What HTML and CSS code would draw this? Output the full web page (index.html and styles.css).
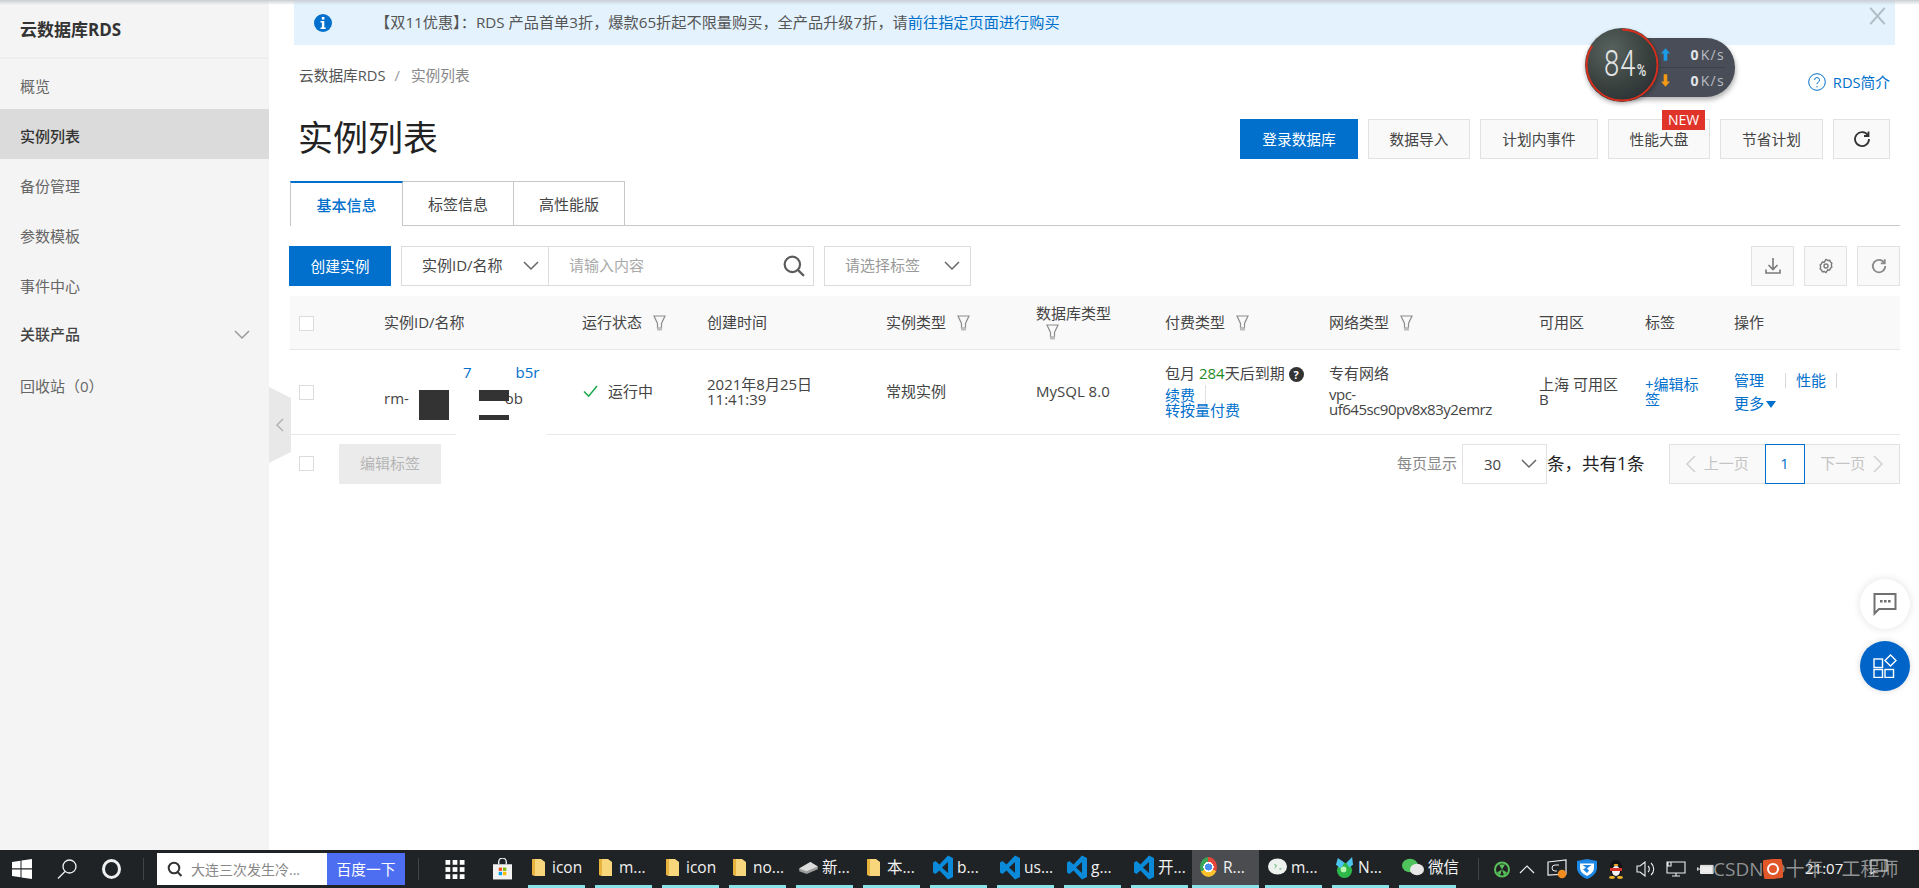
FILE: index.html
```html
<!DOCTYPE html>
<html lang="zh">
<head>
<meta charset="utf-8">
<title>实例列表</title>
<link rel="stylesheet" href="styles.css">
</head>
<body>
<div class="main">
  <aside class="sidebar">
    <div class="side-title">云数据库RDS</div>
    <nav>
      <div class="side-item low">概览</div>
      <div class="side-item active">实例列表</div>
      <div class="side-item low">备份管理</div>
      <div class="side-item low">参数模板</div>
      <div class="side-item low">事件中心</div>
      <div class="side-item strong">关联产品<svg class="side-chev" viewBox="0 0 16 10"><path d="M1 1l7 7 7-7"/></svg></div>
      <div class="side-item low">回收站（0）</div>
    </nav>
  </aside>
  <svg class="collapse" viewBox="0 0 22 76"><path d="M0 0L22 11V65L0 76Z" fill="#e8e8e8"/><path d="M14 32L8 38l6 6" fill="none" stroke="#b4b4b4" stroke-width="1.6"/></svg>
  <section class="content">
    <div class="banner">
      <svg class="info" viewBox="0 0 18 18"><circle cx="9" cy="9" r="9" fill="#0070cc"/><rect x="7.8" y="3" width="2.6" height="2.6" fill="#fff"/><path d="M6.5 7h3.8v6.4h1.4V15H6.5v-1.6h1.4V8.600H6.500z" fill="#fff"/></svg>
      <span class="banner-text">【双11优惠】：RDS 产品首单3折，爆款65折起不限量购买，全产品升级7折，请<a>前往指定页面进行购买</a></span>
      <svg class="banner-close" viewBox="0 0 18 20"><path d="M1 1l16 18M17 1L1 19"/></svg>
    </div>
    <div class="crumb-row">
      <div class="crumb"><span>云数据库RDS</span><i>/</i><em>实例列表</em></div>
      <a class="help"><svg viewBox="0 0 18 18"><circle cx="9" cy="9" r="8.300"/><path d="M6.500 7a2.500 2.500 0 1 1 3.600 2.300c-.8.400-1.100.9-1.100 1.900M9 13v1.300"/></svg>RDS简介</a>
    </div>
    <div class="title-row">
      <h1>实例列表</h1>
      <div class="actions">
        <button class="btn primary w118">登录数据库</button>
        <button class="btn w102">数据导入</button>
        <button class="btn w118">计划内事件</button>
        <button class="btn w102 has-new">性能大盘<span class="new">NEW</span></button>
        <button class="btn w103">节省计划</button>
        <button class="btn w57"><svg class="ico-refresh dark" viewBox="0 0 18 18"><path d="M15 5.500A7 7 0 1 0 16 9M15.500 1.500v4.500H11"/></svg></button>
      </div>
    </div>
    <div class="tabs">
      <div class="tab on">基本信息</div>
      <div class="tab">标签信息</div>
      <div class="tab">高性能版</div>
    </div>
    <div class="toolbar">
      <button class="btn primary create">创建实例</button>
      <div class="search">
        <div class="sel-id">实例ID/名称<svg class="chev" viewBox="0 0 16 10"><path d="M1 1l7 7 7-7"/></svg></div>
        <div class="sel-input">请输入内容<svg class="mag" viewBox="0 0 20 20"><circle cx="8.500" cy="8.500" r="7"/><path d="M13.500 13.500L19 19"/></svg></div>
      </div>
      <div class="sel-tag">请选择标签<svg class="chev" viewBox="0 0 16 10"><path d="M1 1l7 7 7-7"/></svg></div>
      <div class="tool-right">
        <button class="tool"><svg viewBox="0 0 16 18"><path d="M8 1v11M3.500 8L8 12.500 12.500 8M1 12.500v3.500h14v-3.500"/></svg></button>
        <button class="tool gap"><svg class="gear" viewBox="0 0 16 18"><path d="M8 1.500l2 1.200 2.200-.3 1 2 1.500 1.500-.6 2.100.6 2.100-1.500 1.500-1 2-2.200-.3L8 16.500 6 15.300l-2.200.3-1-2-1.500-1.500.6-2.100-.6-2.100 1.500-1.500 1-2 2.200.3z"/><circle cx="8" cy="9" r="2.300"/></svg></button>
        <button class="tool"><svg class="redo" viewBox="0 0 18 18"><path d="M15 5.500A7 7 0 1 0 16 9M15.500 1.500v4.500H11"/></svg></button>
      </div>
    </div>
    <table class="grid">
      <colgroup>
        <col class="c0"><col class="c1"><col class="c2"><col class="c3"><col class="c4"><col class="c5"><col class="c6"><col class="c7"><col class="c8"><col class="c9"><col class="c10">
      </colgroup>
      <thead>
        <tr>
          <th><span class="check"></span></th>
          <th>实例ID/名称</th>
          <th>运行状态<svg class="funnel" viewBox="0 0 13 16"><path d="M1 1h11L8.500 8.500V13h-4V8.500z"/><rect class="f-foot" x="4" y="12.500" width="5" height="3"/></svg></th>
          <th>创建时间</th>
          <th>实例类型<svg class="funnel" viewBox="0 0 13 16"><path d="M1 1h11L8.500 8.500V13h-4V8.500z"/><rect class="f-foot" x="4" y="12.500" width="5" height="3"/></svg></th>
          <th>数据库类型<br><svg class="funnel solo" viewBox="0 0 13 16"><path d="M1 1h11L8.500 8.500V13h-4V8.500z"/><rect class="f-foot" x="4" y="12.500" width="5" height="3"/></svg></th>
          <th>付费类型<svg class="funnel" viewBox="0 0 13 16"><path d="M1 1h11L8.500 8.500V13h-4V8.500z"/><rect class="f-foot" x="4" y="12.500" width="5" height="3"/></svg></th>
          <th>网络类型<svg class="funnel" viewBox="0 0 13 16"><path d="M1 1h11L8.500 8.500V13h-4V8.500z"/><rect class="f-foot" x="4" y="12.500" width="5" height="3"/></svg></th>
          <th>可用区</th>
          <th>标签</th>
          <th>操作</th>
        </tr>
      </thead>
      <tbody>
        <tr>
          <td><span class="check"></span></td>
          <td class="id-cell">
            <div class="id-wrap">
              <div class="id-a"><a>7</a><a>b5r</a></div>
              <div class="id-b"><span>rm-</span><span>ob</span></div>
            </div>
          </td>
          <td><span class="status"><svg viewBox="0 0 16 14"><path d="M1 7l5 5 9-11"/></svg>运行中</span></td>
          <td>2021年8月25日<br>11:41:39</td>
          <td>常规实例</td>
          <td>MySQL 8.0</td>
          <td>
            <div class="pay-line">包月 <b>284</b>天后到期<span class="q">?</span></div>
            <div class="links"><a class="sep-r">续费</a><br><a>转按量付费</a></div>
          </td>
          <td><div class="pay-line">专有网络</div><div class="links vpc">vpc-<br>uf645sc90pv8x83y2emrz</div></td>
          <td class="zone">上海 可用区 B</td>
          <td class="tagcell"><a>+编辑标签</a></td>
          <td>
            <div class="ops"><a class="bar">管理</a><a class="bar">性能</a></div>
            <div class="ops more"><a>更多<i class="tri"></i></a></div>
          </td>
        </tr>
      </tbody>
    </table>
    <div class="foot">
      <span class="check"></span>
      <button class="edit-tags">编辑标签</button>
      <div class="pager-wrap">
        <span class="per">每页显示</span>
        <div class="per-sel">30<svg class="chev" viewBox="0 0 16 10"><path d="M1 1l7 7 7-7"/></svg></div>
        <span class="total">条，共有1条</span>
        <div class="pager">
          <span class="pg side"><svg viewBox="0 0 10 18"><path d="M9 1L1 9l8 8"/></svg>上一页</span>
          <span class="pg cur">1</span>
          <span class="pg side">下一页<svg viewBox="0 0 10 18"><path d="M1 1l8 8-8 8"/></svg></span>
        </div>
      </div>
    </div>
  </section>
</div>

<footer class="taskbar">
  <svg class="t-win" viewBox="0 0 20 20"><path d="M0 3l8.500-1.300v7.600H0zM9.500 1.500L20 0v9.300H9.500zM0 10.500h8.500v7.700L0 17zM9.500 10.500H20V20L9.500 18.400z" fill="#fff"/></svg>
  <svg class="t-mag" viewBox="0 0 20 20"><circle cx="12.500" cy="7.500" r="6.500"/><path d="M8 12.500L1 19.500"/></svg>
  <span class="t-ring"></span>
  <span class="t-sep s1"></span>
  <div class="baidu">
    <div class="b-in"><svg viewBox="0 0 16 16"><circle cx="7" cy="7" r="5.300"/><path d="M10.500 11l4 4"/></svg>大连三次发生冷...</div>
    <div class="b-go">百度一下</div>
  </div>
  <span class="t-sep s2"></span>
  <svg class="t-apps" viewBox="0 0 20 20"><g fill="#fff"><rect width="5" height="5"/><rect x="7.500" width="5" height="5"/><rect x="15" width="5" height="5"/><rect y="7.500" width="5" height="5"/><rect x="7.500" y="7.500" width="5" height="5"/><rect x="15" y="7.500" width="5" height="5"/><rect y="15" width="5" height="5"/><rect x="7.500" y="15" width="5" height="5"/><rect x="15" y="15" width="5" height="5"/></g></svg>
  <svg class="t-store" viewBox="0 0 20 22"><path d="M6 6V3.500a4 4 0 0 1 8 0V6" fill="none" stroke="#e8e8e8" stroke-width="1.500"/><rect y="6" width="20" height="16" fill="#f2f2f2"/><rect x="6" y="9.500" width="3.500" height="3.500" fill="#f25022"/><rect x="10.500" y="9.500" width="3.500" height="3.500" fill="#7fba00"/><rect x="6" y="14" width="3.500" height="3.500" fill="#00a4ef"/><rect x="10.500" y="14" width="3.500" height="3.500" fill="#ffb900"/></svg>
  <div class="apps">
    <div class="app"><svg class="i-folder" viewBox="0 0 13 18"><path d="M0 1h9l4 3v14H3l-3-1z" fill="#f7d67c"/><path d="M0 1h3v16H0z" fill="#e7b33d"/></svg>icon</div>
    <div class="app"><svg class="i-folder" viewBox="0 0 13 18"><path d="M0 1h9l4 3v14H3l-3-1z" fill="#f7d67c"/><path d="M0 1h3v16H0z" fill="#e7b33d"/></svg>m...</div>
    <div class="app"><svg class="i-folder" viewBox="0 0 13 18"><path d="M0 1h9l4 3v14H3l-3-1z" fill="#f7d67c"/><path d="M0 1h3v16H0z" fill="#e7b33d"/></svg>icon</div>
    <div class="app"><svg class="i-folder" viewBox="0 0 13 18"><path d="M0 1h9l4 3v14H3l-3-1z" fill="#f7d67c"/><path d="M0 1h3v16H0z" fill="#e7b33d"/></svg>no...</div>
    <div class="app"><svg class="i-drive" viewBox="0 0 20 14"><path d="M0 8l12-7 8 5v3L8 14 0 11z" fill="#9b9b9b"/><path d="M0 8l8 3 12-5-8-5z" fill="#dcdcdc"/></svg>新...</div>
    <div class="app"><svg class="i-folder" viewBox="0 0 13 18"><path d="M0 1h9l4 3v14H3l-3-1z" fill="#f7d67c"/><path d="M0 1h3v16H0z" fill="#e7b33d"/></svg>本...</div>
    <div class="app"><svg class="i-code" viewBox="0 0 20 24"><path fill-rule="evenodd" d="M15 0l5 2.500v19L15 24 6.500 15 2.500 18.500 0 17V7l2.500-1.500 4 3.500zM15 6.500L9 12l6 5.500z" fill="#0a8ad8"/></svg>b...</div>
    <div class="app"><svg class="i-code" viewBox="0 0 20 24"><path fill-rule="evenodd" d="M15 0l5 2.500v19L15 24 6.500 15 2.500 18.500 0 17V7l2.500-1.500 4 3.500zM15 6.500L9 12l6 5.500z" fill="#0a8ad8"/></svg>us...</div>
    <div class="app"><svg class="i-code" viewBox="0 0 20 24"><path fill-rule="evenodd" d="M15 0l5 2.500v19L15 24 6.500 15 2.500 18.500 0 17V7l2.500-1.500 4 3.500zM15 6.500L9 12l6 5.500z" fill="#0a8ad8"/></svg>g...</div>
    <div class="app"><svg class="i-code" viewBox="0 0 20 24"><path fill-rule="evenodd" d="M15 0l5 2.500v19L15 24 6.500 15 2.500 18.500 0 17V7l2.500-1.500 4 3.500zM15 6.500L9 12l6 5.500z" fill="#0a8ad8"/></svg>开...</div>
    <div class="app cur"><span class="i-chrome"></span>R...</div>
    <div class="app"><svg class="i-chat" viewBox="0 0 20 18"><ellipse cx="10" cy="8.500" rx="10" ry="8.500" fill="#eef2ee"/><path d="M7 6l2 2-2 2M12 11h2" stroke="#3ba55c" fill="none"/></svg>m...</div>
    <div class="app"><svg class="i-gem" viewBox="0 0 20 24"><circle cx="10" cy="15" r="8" fill="#2fb84a"/><path d="M3 2l7 5-4 6-5-4zM12 7l6-6 1 8-4 3z" fill="#4cc3ec"/><circle cx="9" cy="14" r="3" fill="#b8f5b0"/></svg>N...</div>
    <div class="app"><svg class="i-wechat" viewBox="0 0 22 18"><ellipse cx="8" cy="7.500" rx="8" ry="6.800" fill="#4fc35b"/><ellipse cx="15" cy="11.500" rx="7" ry="5.800" fill="#e8e8e8"/></svg>微信</div>
  </div>
  <span class="t-sep s3"></span>
  <div class="tray">
    <svg class="tr-g" viewBox="0 0 16 16"><rect width="16" height="16" rx="3" fill="#222"/><circle cx="8" cy="8" r="7" fill="none" stroke="#58c05a" stroke-width="2"/><path d="M8 8L5 3h6zM8 8l5 3-3 3zM8 8l-5 3 3 3z" fill="#58c05a"/></svg>
    <svg class="tr-up" viewBox="0 0 16 9"><path d="M1 8l7-7 7 7"/></svg>
    <svg class="tr-sync" viewBox="0 0 20 20"><path d="M1 3l18-2v14L1 16z" fill="none" stroke="#eee" stroke-width="1.200"/><path d="M12 6H8a2 2 0 0 0 0 6h2" fill="none" stroke="#eee"/><circle cx="15" cy="15" r="4.300" fill="#f28c1e"/></svg>
    <svg class="tr-shield" viewBox="0 0 20 20"><path d="M0 2l10-2 10 2v7c0 5-5 9-10 11C5 18 0 14 0 9z" fill="#1e88e5"/><path d="M3 4.500h14V9c0 3.500-3.500 6.500-7 8-3.500-1.500-7-4.500-7-8z" fill="#fff"/><path d="M5.500 6h9l-4.500 3.500 2 2L10 14l-4-3.500 3-2z" fill="#1e88e5"/></svg>
    <svg class="tr-qq" viewBox="0 0 14 20"><ellipse cx="7" cy="9" rx="6" ry="8" fill="#111"/><ellipse cx="7" cy="12" rx="4" ry="5" fill="#f4f4f4"/><rect x="1" y="9" width="12" height="3" fill="#d9342b"/><ellipse cx="7" cy="6" rx="2.500" ry="1" fill="#f1b32b"/><ellipse cx="3" cy="18.500" rx="3" ry="1.400" fill="#f1b32b"/><ellipse cx="11" cy="18.500" rx="3" ry="1.400" fill="#f1b32b"/></svg>
    <svg class="tr-vol" viewBox="0 0 20 16"><path d="M1 5h3l5-4v14l-5-4H1zM12 5a4 4 0 0 1 0 6M15 2a8 8 0 0 1 0 12"/></svg>
    <svg class="tr-net" viewBox="0 0 20 16"><path d="M1 1h18v11H1zM10 12v3M6 15h8M2 1v4h3V1"/></svg>
    <svg class="tr-bat" viewBox="0 0 20 12"><path d="M5 2h14v9H5zM5 6H1M2 4v4"/><rect x="6" y="3" width="12" height="7" fill="#eee"/></svg>
    <span class="clock">21:07</span>
    <svg class="tr-note" viewBox="0 0 18 16"><path d="M1 1h16v11H5l-4 3z"/></svg>
  </div>
  <div class="mark"><span>CSDN @十年</span><svg class="mark-ico" viewBox="0 0 20 20"><rect width="20" height="20" rx="3" fill="#e2572a" transform="rotate(-8 10 10)"/><circle cx="10" cy="10" r="5" fill="none" stroke="#fff" stroke-width="2"/></svg><span class="mark-tail">工程师</span></div>
</footer>

<div class="topshade"></div>

<div class="gauge">
  <div class="g-pill">
    <div class="g-row"><svg viewBox="0 0 10 14"><path d="M5 0l5 6H7v8H3V6H0z" fill="#1c9be6"/></svg><span><b>0</b>K/s</span></div>
    <div class="g-row"><svg viewBox="0 0 10 14"><path d="M5 14l5-6H7V0H3v8H0z" fill="#f29a16"/></svg><span><b>0</b>K/s</span></div>
  </div>
  <div class="g-circle">
    <svg viewBox="0 0 74 74"><circle cx="37" cy="37" r="35.500" fill="none" stroke="#d62f1c" stroke-width="2" stroke-dasharray="187.400 35.700" transform="rotate(-90 37 37)"/></svg>
    <span class="g-num">84<small>%</small></span>
  </div>
</div>

<div class="mask m-white"></div>
<div class="mask m-white2"></div>
<div class="mask m-a"></div>
<div class="mask m-b"></div>
<div class="mask m-c"></div>

<button class="fab fab-chat"><svg viewBox="0 0 24 24"><path d="M1.500 2h21v15H6l-4.500 4.500z" fill="none" stroke="#707070" stroke-width="2"/><path d="M7 8h2.600v2.600H7zM11 8h2.600v2.600H11zM15 8h2.600v2.600H15z" fill="#707070"/></svg></button>
<button class="fab fab-apps"><svg viewBox="0 0 24 24" fill="none" stroke="#fff" stroke-width="1.400"><rect x="1" y="5" width="8.500" height="8.500"/><rect x="1" y="15.500" width="8.500" height="8"/><rect x="12" y="15.500" width="8.500" height="8"/><path d="M17.500 1l5.500 5.500-5.500 5.500L12 6.500z"/></svg></button>
</body>
</html>
```
FILE: styles.css
```css
* { box-sizing: border-box; }
html, body { margin: 0; height: 888px; overflow: hidden; background: #fff; }
body {
  font-family: "Open Sans", "Noto Sans CJK SC", sans-serif;
  font-size: 15px;
  line-height: 15px;
  color: #333;
  display: flex;
  flex-direction: column;
  position: relative;
}
a { color: #0070cc; text-decoration: none; }
button { font: inherit; cursor: pointer; }

.main { display: flex; height: 850px; position: relative; }

/* sidebar */
.sidebar { width: 269px; flex: none; background: #f4f4f4; }
.side-title {
  height: 59px;
  padding: 12px 0 0 20px;
  font-size: 17px;
  line-height: 36px;
  font-weight: 700;
  color: #333;
  border-bottom: 2px solid #eeeeee;
}
.side-item {
  height: 50px;
  line-height: 50px;
  padding-left: 20px;
  color: #666;
  position: relative;
  font-size: 15px;
}
.side-item.low { padding-top: 2px; }
.side-item.active { background: #dbdbdb; color: #333; font-weight: 500; padding-top: 2px; }
.side-item.strong { color: #444; font-weight: 500; }
.side-chev { position: absolute; left: 234px; top: 21px; width: 16px; height: 10px; fill: none; stroke: #9a9a9a; stroke-width: 1.500; }

.collapse { position: absolute; left: 269px; top: 387px; width: 22px; height: 76px; }

/* content */
.content { flex: 1; min-width: 0; padding-bottom: 0; }
.banner {
  height: 45px;
  margin: 0 24px 0 25px;
  background: #e3f2fd;
  display: flex;
  align-items: center;
  position: relative;
  padding-left: 20px;
  color: #555;
}
.info { width: 18px; height: 20px; margin-top: 0; flex: none; }
.banner-text { margin-left: 43px; font-size: 15.200px; }
.banner-close { position: absolute; right: 8px; top: 7px; width: 19px; height: 18px; fill: none; stroke: #b2bec6; stroke-width: 2.400; }

.crumb-row { display: flex; justify-content: space-between; height: 74px; padding: 0 29px 0 30px; }
.crumb { margin-top: 23px; color: #555; font-size: 14.700px; }
.crumb i { font-style: normal; color: #999; margin: 0 11px 0 9px; }
.crumb em { font-style: normal; color: #888; }
.help { display: flex; align-items: center; height: 20px; margin-top: 27px; font-size: 14.700px; }
.help svg { width: 18px; height: 18px; margin-right: 7px; fill: none; stroke: #0070cc; stroke-width: 1; }

.title-row { display: flex; justify-content: space-between; height: 40px; padding: 0 29px 0 29px; margin-bottom: 22px; }
h1 { margin: 0; font-size: 35px; line-height: 37px; font-weight: 400; color: #222; }
.actions { display: flex; gap: 10px; }

.btn {
  height: 40px;
  border: 1px solid #e2e2e2;
  background: #f9f9f9;
  color: #444;
  padding: 0;
  font-size: 14.700px;
  position: relative;
}
.btn.primary { background: #0070cc; border-color: #0070cc; color: #fff; }
.w118 { width: 118px; }
.w102 { width: 102px; }
.w103 { width: 103px; }
.w57 { width: 57px; }
.new {
  position: absolute;
  left: 53px;
  top: -10px;
  width: 43px;
  height: 20px;
  background: #e0332a;
  color: #fff;
  line-height: 20px;
  font-size: 14px;
  text-align: center;
}
.ico-refresh { width: 18px; height: 18px; fill: none; stroke: #333; stroke-width: 1.800; vertical-align: middle; }

.tabs { display: flex; height: 45px; margin: 0 19px 0 21px; border-bottom: 1px solid #c8c8c8; }
.tab {
  width: 111px;
  height: 45px;
  border: 1px solid #c8c8c8;
  border-left: 0;
  line-height: 45px;
  text-align: center;
  color: #444;
}
.tab.on {
  width: 113px;
  border-left: 1px solid #c8c8c8;
  border-top: 2px solid #0070cc;
  border-bottom: 0;
  background: #fff;
  color: #0070cc;
  font-weight: 500;
}

.toolbar { display: flex; height: 40px; margin: 20px 19px 10px 20px; }
.create { width: 102px; border: 0; }
.search { display: flex; width: 413px; margin-left: 10px; border: 1px solid #dcdcdc; height: 40px; }
.sel-id {
  width: 147px;
  border-right: 1px solid #dcdcdc;
  padding-left: 20px;
  line-height: 36px;
  color: #444;
  position: relative;
}
.chev { position: absolute; width: 16px; height: 10px; fill: none; stroke: #666; stroke-width: 1.500; }
.sel-id .chev { right: 9px; top: 14px; }
.sel-input { flex: 1; padding-left: 20px; line-height: 36px; color: #aaa; position: relative; }
.mag { position: absolute; right: 8px; top: 8px; width: 22px; height: 22px; fill: none; stroke: #5c5c5c; stroke-width: 2; }
.sel-tag { width: 147px; margin-left: 10px; border: 1px solid #dcdcdc; padding-left: 20px; line-height: 36px; color: #999; position: relative; }
.sel-tag .chev { right: 10px; top: 14px; }
.tool-right { display: flex; margin-left: auto; }
.tool { width: 43px; height: 40px; background: #f9f9f9; border: 1px solid #e2e2e2; padding: 0; }
.tool.gap { margin: 0 10px; }
.tool svg { width: 16px; height: 18px; fill: none; stroke: #7a7a7a; stroke-width: 1.600; vertical-align: middle; }
.tool svg.gear { width: 14px; height: 16px; }
.tool svg.redo { stroke-width: 2; stroke: #8a8a8a; }

/* table */
.grid { width: 1610px; margin-left: 21px; border-collapse: collapse; table-layout: fixed; }
.c0 { width: 94px; } .c1 { width: 198px; } .c2 { width: 125px; } .c3 { width: 179px; }
.c4 { width: 150px; } .c5 { width: 129px; } .c6 { width: 164px; } .c7 { width: 210px; }
.c8 { width: 106px; } .c9 { width: 89px; } .c10 { width: 166px; }
th, td { padding: 0; text-align: left; font-weight: 400; vertical-align: middle; }
th:first-child, td:first-child { padding-left: 9px; }
thead tr { background: #f9f9f9; height: 53px; border-bottom: 1px solid #e8e8e8; }
th { color: #444; line-height: 18px; }
tbody tr { height: 85px; border-bottom: 1px solid #e8e8e8; }
td { color: #444; }
.check { display: inline-block; width: 15px; height: 15px; border: 1px solid #dcdcdc; background: #fff; vertical-align: middle; }
.funnel { width: 13px; height: 16px; margin-left: 11px; fill: none; stroke: #8e8e8e; stroke-width: 1.200; vertical-align: -3px; }
.funnel .f-foot { fill: #bdbdbd; stroke: none; }
.funnel.solo { margin-left: 10px; }
.id-wrap { height: 42px; display: flex; flex-direction: column; gap: 10px; margin-top: -14px; }
.id-a { padding-left: 79px; display: flex; gap: 44px; line-height: 16px; }
.id-b { display: flex; gap: 96px; line-height: 16px; }
.status { display: inline-flex; align-items: center; }
.status svg { width: 15px; height: 13px; margin: 0 10px 0 1px; fill: none; stroke: #1ba84a; stroke-width: 1.600; }
.pay-line { margin-bottom: 6px; white-space: nowrap; }
.pay-line b { font-weight: 400; color: #1f8a1f; }
.q { display: inline-block; width: 15px; height: 15px; border-radius: 50%; background: #333; color: #fff; font-size: 11px; line-height: 15px; text-align: center; font-weight: 700; margin-left: 4px; vertical-align: 0; }
.sep-r { padding-right: 10px; border-right: 1px solid #e0e0e0; }
.links { line-height: 15px; }
.vpc { color: #444; letter-spacing: -.5px; }
.zone { padding-right: 14px; }
.tagcell { padding-right: 24px; }
.ops { display: flex; }
.bar { padding-right: 10px; margin-right: 10px; border-right: 1px solid #d8d8d8; }
.bar:first-child { padding-right: 21px; }
.more { margin-top: 8px; }
.tri { display: inline-block; width: 0; height: 0; border: 5.500px solid transparent; border-top: 7px solid #0070cc; border-bottom: 0; margin-left: 2px; vertical-align: 1px; }

.foot { display: flex; align-items: center; height: 40px; margin: 9px 19px 0 30px; }
.edit-tags { width: 102px; height: 40px; margin-left: 25px; background: #ebebeb; border: 0; color: #b5b5b5; padding: 0; }
.pager-wrap { display: flex; align-items: center; margin-left: auto; }
.per { color: #888; margin-right: 5px; }
.per-sel { width: 85px; height: 40px; border: 1px solid #e2e2e2; line-height: 38px; padding-left: 21px; position: relative; color: #444; }
.per-sel .chev { right: 9px; top: 14px; }
.total { width: 122px; font-size: 17.500px; color: #222; }
.pager { display: flex; height: 40px; width: 231px; border: 1px solid #e2e2e2; background: #f9f9f9; }
.pg { display: flex; align-items: center; justify-content: center; color: #c4c4c4; }
.pg.side { flex: 1; gap: 8px; }
.pg.side svg { width: 10px; height: 18px; fill: none; stroke: #d0d0d0; stroke-width: 1.500; }
.pg.cur { width: 40px; margin: -1px 0; border: 1px solid #0070cc; background: #fff; color: #0070cc; }

/* taskbar */
.taskbar {
  height: 38px;
  flex: none;
  background: #1f2326;
  display: flex;
  align-items: center;
  position: relative;
  color: #f2f2f2;
}
.t-win { width: 20px; height: 20px; margin-left: 12px; flex: none; }
.t-mag { width: 20px; height: 20px; margin-left: 25px; flex: none; fill: none; stroke: #f2f2f2; stroke-width: 1.300; }
.t-ring { width: 19px; height: 20px; margin-left: 25px; flex: none; border: 3px solid #f0f0f0; border-radius: 50%; }
.t-sep { width: 1px; height: 22px; background: #444; flex: none; }
.s1 { margin-left: 22px; }
.baidu { display: flex; height: 32px; margin-left: 13px; flex: none; }
.b-in { width: 170px; background: #fff; color: #888; padding-left: 10px; display: flex; align-items: center; gap: 8px; font-size: 14px; white-space: nowrap; }
.b-in svg { width: 16px; height: 16px; fill: none; stroke: #333; stroke-width: 2; flex: none; }
.b-go { width: 78px; background: #4e6ef2; color: #fff; text-align: center; line-height: 32px; font-size: 14.700px; }
.s2 { margin-left: 13px; }
.t-apps { width: 20px; height: 19px; margin-left: 26px; flex: none; }
.t-store { width: 19px; height: 22px; margin-left: 28px; flex: none; }
.apps { display: flex; height: 38px; margin-left: 16px; flex: none; }
.app {
  width: 67px;
  height: 38px;
  display: flex;
  align-items: center;
  padding: 0 0 4px 3px;
  gap: 7px;
  position: relative;
  white-space: nowrap;
  font-size: 15.500px;
}
.app::after { content: ""; position: absolute; left: 0; bottom: 0; width: 57px; height: 3px; background: #8be3ea; }
.app.cur { margin: 0 6px 0 -6px; background: #4a4c50; padding-left: 8px; }
.app.cur::after { width: 67px; }
.i-folder { width: 13px; height: 18px; flex: none; margin-left: 1px; }
.i-drive { width: 19px; height: 13px; flex: none; margin-right: -3px; }
.i-code { width: 20px; height: 25px; flex: none; margin-right: -3px; }
.i-chrome { width: 17px; height: 20px; flex: none; border-radius: 50%; margin-right: -1px; background: radial-gradient(circle, #4a8ef0 0 26%, #fff 28% 38%, transparent 40%), conic-gradient(#e8473b 0 33%, #fbc02d 33% 66%, #3aa757 66%); }
.i-chat { width: 19px; height: 18px; flex: none; margin-right: -3px; }
.i-gem { width: 19px; height: 23px; flex: none; margin-right: -3px; }
.i-wechat { width: 22px; height: 18px; flex: none; margin-right: -3px; }
.s3 { margin-left: 12px; }
.tray { display: flex; align-items: center; flex: 1; height: 38px; padding-left: 15px; position: relative; }
.tray svg { flex: none; }
.tr-g { width: 16px; height: 17px; }
.tr-up { width: 16px; height: 9px; margin-left: 9px; fill: none; stroke: #eee; stroke-width: 1.200; }
.tr-sync { width: 20px; height: 20px; margin-left: 12px; }
.tr-shield { width: 20px; height: 20px; margin-left: 10px; }
.tr-qq { width: 14px; height: 20px; margin-left: 12px; }
.tr-vol { width: 20px; height: 16px; margin-left: 13px; fill: none; stroke: #eee; stroke-width: 1.100; }
.tr-net { width: 20px; height: 16px; margin-left: 10px; fill: none; stroke: #eee; stroke-width: 1.100; }
.tr-bat { width: 18px; height: 12px; margin-left: 10px; fill: none; stroke: #eee; stroke-width: 1.100; }
.clock { position: absolute; left: 326px; top: 11px; font-size: 15px; color: #f2f2f2; }
.tr-note { position: absolute; left: 391px; top: 9px; width: 18px; height: 16px; fill: none; stroke: #eee; stroke-width: 1.100; }
.mark {
  position: absolute;
  left: 1713px;
  top: 8px;
  display: flex;
  align-items: center;
  font-size: 19px;
  line-height: 22px;
  color: rgba(190, 190, 190, .72);
  white-space: nowrap;
}
.mark-ico { position: absolute; left: 50px; top: 1px; width: 20px; height: 20px; }
.mark-tail { margin-left: 18px; }

.topshade { position: absolute; left: 0; top: 0; width: 1919px; height: 5px; background: linear-gradient(#c9ced3, rgba(210, 214, 218, 0)); }

/* floating monitor */
.gauge { position: absolute; left: 1585px; top: 28px; width: 150px; height: 75px; }
.g-pill {
  position: absolute;
  left: 46px;
  top: 10px;
  width: 104px;
  height: 59px;
  border-radius: 0 29px 29px 0;
  background: #484d57;
  box-shadow: 1px 3px 5px rgba(0, 0, 0, .3);
  padding: 4px 10px 0 30px;
}
.g-row { display: flex; justify-content: space-between; align-items: center; height: 25px; color: #b9bdc4; font-size: 14px; letter-spacing: 1.300px; }
.g-row + .g-row { border-top: 1px solid #3d4149; }
.g-row svg { width: 9px; height: 13px; }
.g-row b { font-weight: 700; color: #e2e4e8; margin-right: 1px; }
.g-circle {
  position: absolute;
  left: 0;
  top: 0;
  width: 74px;
  height: 74px;
  border-radius: 50%;
  background: radial-gradient(circle at 35% 30%, #57625f, #3a423f 50%, #1f2630);
  box-shadow: 0 2px 4px rgba(0, 0, 0, .3);
}
.g-circle svg { position: absolute; inset: 0; width: 74px; height: 74px; }
.g-num { position: absolute; left: 19px; top: 15px; color: #e4e6e6; font-family: "Roboto", sans-serif; font-weight: 300; font-size: 36px; line-height: 42px; letter-spacing: 1.500px; white-space: nowrap; transform: scaleX(.76); transform-origin: left center; }
.g-num small { font-size: 17px; font-weight: 500; letter-spacing: 0; }

/* redaction marks over the instance name */
.mask { position: absolute; }
.m-white { left: 456px; top: 425px; width: 91px; height: 12px; background: #fff; }
.m-white2 { left: 468px; top: 354px; width: 52px; height: 14px; background: #fff; border-radius: 8px; }
.m-a { left: 419px; top: 390px; width: 30px; height: 30px; background: #333; }
.m-b { left: 479px; top: 390px; width: 30px; height: 11px; background: #333; }
.m-c { left: 479px; top: 415px; width: 30px; height: 5px; background: #333; }

.fab { position: absolute; left: 1860px; width: 50px; height: 50px; border: 0; border-radius: 50%; padding: 0; display: flex; align-items: center; justify-content: center; }
.fab-chat { top: 579px; background: #fff; box-shadow: 0 0 8px rgba(0, 0, 0, .12); }
.fab-apps { top: 641px; background: #0064c8; box-shadow: 0 0 6px rgba(0, 0, 0, .15); }
.fab svg { width: 24px; height: 24px; }
```
